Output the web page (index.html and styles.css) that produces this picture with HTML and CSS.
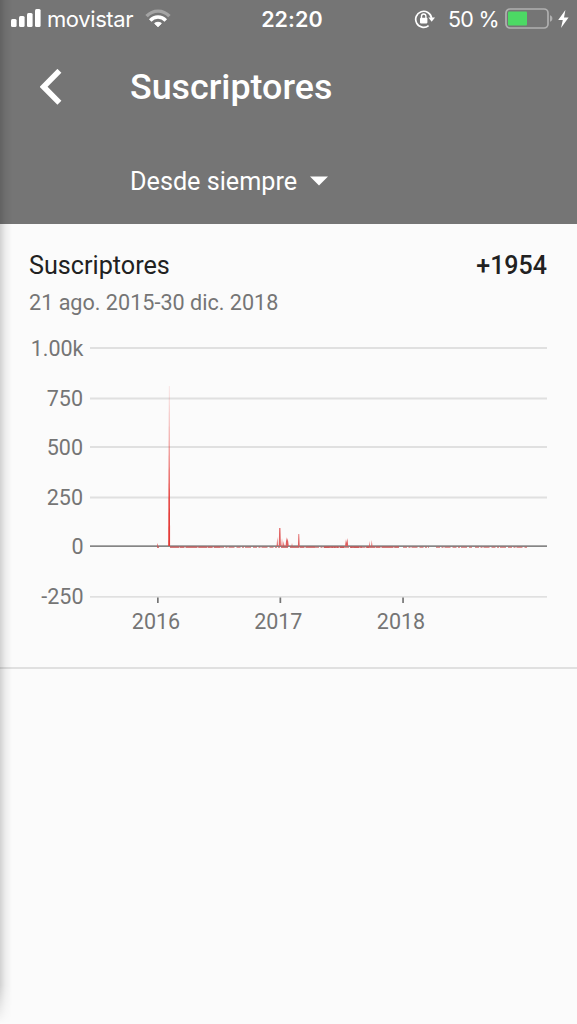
FILE: index.html
```html
<!DOCTYPE html>
<html lang="es">
<head>
    <meta charset="UTF-8">
    <meta name="viewport" content="width=device-width, initial-scale=1.0">
    <title>Suscriptores</title>
    <link rel="stylesheet" href="styles.css">
</head>
<body>
    <header class="header">
        <div class="status-bar">
            <div class="status-left">
                <svg class="signal" width="31" height="19" viewBox="0 0 31 19" fill="#fff">
                    <rect x="0" y="10" width="5.6" height="8" rx="1.5"/>
                    <rect x="8" y="7" width="5.6" height="11" rx="1.5"/>
                    <rect x="16" y="4" width="5.6" height="14" rx="1.5"/>
                    <rect x="24" y="0" width="5.6" height="18" rx="1.5"/>
                </svg>
                <span class="carrier">movistar</span>
                <svg class="wifi" width="26" height="20" viewBox="0 0 26 20" fill="none" stroke-width="3.4">
                    <path d="M1.6 7.2C8 0.4 18 0.4 24.4 7.2" stroke="#a4a4a4"/>
                    <path d="M5.2 11.5C9.6 6.8 16.4 6.8 20.8 11.5" stroke="#fff"/>
                    <path d="M9.6 14.4C11.3 12.9 14.7 12.9 16.4 14.4L13 17.7Z" fill="#fff" stroke="#fff" stroke-width="1"/>
                </svg>
            </div>
            <span class="clock">22:20</span>
            <div class="status-right">
                <svg class="lock" width="22" height="20" viewBox="0 0 22 20" fill="none" stroke="#fff">
                    <path d="M14.6 16.6A8 8 0 1 1 17.6 9" stroke-width="1.7"/>
                    <path d="M14.4 8.6H21L17.7 12.8Z" fill="#fff" stroke="none"/>
                    <rect x="6" y="8.8" width="7.4" height="5.6" rx="0.8" fill="#fff" stroke="none"/>
                    <path d="M7.5 9V7.2A2.2 2.2 0 0 1 11.9 7.2V9" stroke-width="1.4"/>
                </svg>
                <span class="percent">50 %</span>
                <svg class="battery" width="49" height="22" viewBox="0 0 49 22">
                    <rect x="1" y="1" width="42" height="19" rx="4" fill="none" stroke="#b0b0b0" stroke-width="1.7"/>
                    <rect x="3" y="3.5" width="19" height="14" rx="1" fill="#4cd964"/>
                    <path d="M45 7.2C48.2 8.3 48.2 12.7 45 13.8Z" fill="#b0b0b0"/>
                </svg>
                <svg class="bolt" width="11" height="18" viewBox="0 0 11 18" fill="#fff">
                    <path d="M7.4 0L0.2 10H4.8L3 18L10.6 7.6H6Z"/>
                </svg>
            </div>
        </div>
        <div class="title-bar">
            <svg class="back" width="22" height="36" viewBox="0 0 22 36" fill="none" stroke="#fff" stroke-width="5.6">
                <path d="M19.4 1.8L3.6 17.8L19.4 33.8"/>
            </svg>
            <h1 class="title">Suscriptores</h1>
        </div>
        <div class="period">
            <span>Desde siempre</span>
            <svg width="18" height="10" viewBox="0 0 18 10" fill="#fff">
                <path d="M0 0.5H18L9 9.5Z"/>
            </svg>
        </div>
    </header>

    <main class="card">
        <div class="card-top">
            <h2 class="card-title">Suscriptores</h2>
            <span class="card-total">+1954</span>
        </div>
        <p class="card-dates">21 ago. 2015-30 dic. 2018</p>

        <svg class="chart" width="577" height="320" viewBox="0 330 577 320">
            <defs>
                <linearGradient id="fade" gradientUnits="userSpaceOnUse" x1="0" y1="386" x2="0" y2="546">
                    <stop offset="0" stop-color="#e53935" stop-opacity="0.15"/>
                    <stop offset="0.35" stop-color="#e53935" stop-opacity="0.5"/>
                    <stop offset="0.7" stop-color="#e53935" stop-opacity="0.95"/>
                    <stop offset="1" stop-color="#e53935"/>
                </linearGradient>
            </defs>

            <!-- grid -->
            <g class="grid">
                <rect x="90" y="347" width="457" height="2"/>
                <rect x="90" y="397.5" width="457" height="2"/>
                <rect x="90" y="446" width="457" height="2"/>
                <rect x="90" y="496.5" width="457" height="2"/>
                <rect x="90" y="596" width="457" height="1.7"/>
            </g>
            <rect class="zero" x="90" y="545.3" width="457" height="1.7"/>

            <!-- daily values -->
            <path d="M168.2 546L168.9 386H169.6L170.1 546Z" fill="url(#fade)"/>
            <path class="spikes" d="M157 546L157.6 543L158.2 546ZM276.6 546L277.3 537L278 546ZM278.7 546L279.2 528H280.4L280.9 546ZM281.4 546L282 538L282.6 546ZM283 546L283.7 541L284.4 546ZM285.6 546L286.4 537L287 541L287.7 538L288.8 546ZM291.5 546L292 543L292.5 546ZM297.9 546L298.4 534H299.2L299.7 546ZM345 546L346 539L346.6 543L347.4 538L348.2 546ZM369 546L369.5 541L370 546ZM371.2 546L371.8 540L372.4 546Z"/>
            <g class="losses">
                <path d="M157 547.1h2M170 547.1h50M281 547.1h7M290 547.1h25M324 547.1h20M350 547.1h12M366 547.1h33" stroke-width="1.4" stroke-dasharray="9 .5 5 1 12 .7"/>
                <path d="M220 547.2h60M315 547.2h30M345 547.2h25M403 547.2h26M436 547.2h36M475 547.2h52" stroke-width="1.1" stroke-opacity="0.8" stroke-dasharray="4 1.5 2 1 6 2"/>
            </g>

            <!-- years -->
            <g class="ticks">
                <rect x="157" y="597.5" width="1.7" height="5.5"/>
                <rect x="279.5" y="597.5" width="1.7" height="5.5"/>
                <rect x="402.2" y="597.5" width="1.7" height="5.5"/>
            </g>
            <g class="labels labels-y">
                <text x="83.5" y="355.5">1.00k</text>
                <text x="83" y="405.5">750</text>
                <text x="83" y="454.5">500</text>
                <text x="83" y="504.5">250</text>
                <text x="83.5" y="553.5">0</text>
                <text x="83.5" y="604">-250</text>
            </g>
            <g class="labels labels-x">
                <text x="156" y="628.5">2016</text>
                <text x="278.3" y="628.5">2017</text>
                <text x="401" y="628.5">2018</text>
            </g>
        </svg>
    </main>
    <div class="edge-shadow"></div>
</body>
</html>
```

FILE: styles.css
```css
body {
    margin: 0;
    height: 1024px;
    position: relative;
    overflow: hidden;
    background: #fbfbfb;
    font-family: Roboto, sans-serif;
}
svg {
    display: block;
    flex: none;
}
.header {
    box-sizing: border-box;
    height: 223.5px;
    background: #757575;
    color: #fff;
}
.status-bar {
    display: grid;
    grid-template-columns: 1fr auto 1fr;
    align-items: center;
    height: 37px;
    padding: 0 8px 0 11px;
    font-family: Inter, sans-serif;
    font-size: 22px;
}
.status-left,
.status-right {
    display: flex;
    align-items: center;
}
.status-right {
    justify-content: flex-end;
}
.carrier {
    margin-left: 5px;
    letter-spacing: -0.4px;
}
.wifi {
    margin-left: 12px;
}
.clock {
    padding-left: 4px;
    font-size: 21.5px;
    font-weight: 600;
    letter-spacing: 0.1px;
}
.percent {
    margin: 0 6px 0 12px;
    font-size: 21.5px;
    letter-spacing: -0.7px;
}
.bolt {
    margin-left: 4px;
}
.title-bar {
    display: flex;
    align-items: center;
    height: 100px;
    padding-left: 40px;
}
.title {
    margin: 0 0 0 68px;
    font-size: 35.8px;
    font-weight: 500;
}
.period {
    display: flex;
    align-items: center;
    gap: 13px;
    height: 88px;
    padding-left: 130px;
    font-size: 25.2px;
}
.card {
    height: 443.5px;
    border-bottom: 2px solid #e0e0e0;
}
.card-top {
    display: flex;
    align-items: center;
    justify-content: space-between;
    padding: 25px 30px 0 29px;
    height: 34px;
    font-size: 25px;
    color: #212121;
}
.card-title {
    margin: 0;
    font-size: 25.2px;
    font-weight: 400;
}
.card-total {
    font-weight: 500;
}
.card-dates {
    margin: 0;
    padding-left: 29px;
    height: 47.5px;
    line-height: 40px;
    font-size: 21.6px;
    color: #757575;
}
.grid {
    fill: #e0e0e0;
}
.zero {
    fill: #858585;
}
.ticks {
    fill: #757575;
}
.spikes {
    fill: #e06060;
}
.losses {
    stroke: #c94c4c;
    fill: none;
}
.labels {
    font-size: 21.5px;
    fill: #757575;
}
.labels-y {
    text-anchor: end;
}
.labels-x {
    text-anchor: middle;
}
.edge-shadow {
    position: absolute;
    left: 0;
    top: 0;
    width: 12px;
    height: 1024px;
    background: linear-gradient(to right, rgba(0,0,0,0.16), rgba(0,0,0,0.06) 45%, rgba(0,0,0,0));
    -webkit-mask-image: linear-gradient(to bottom, #000 985px, transparent);
    mask-image: linear-gradient(to bottom, #000 985px, transparent);
}
```
